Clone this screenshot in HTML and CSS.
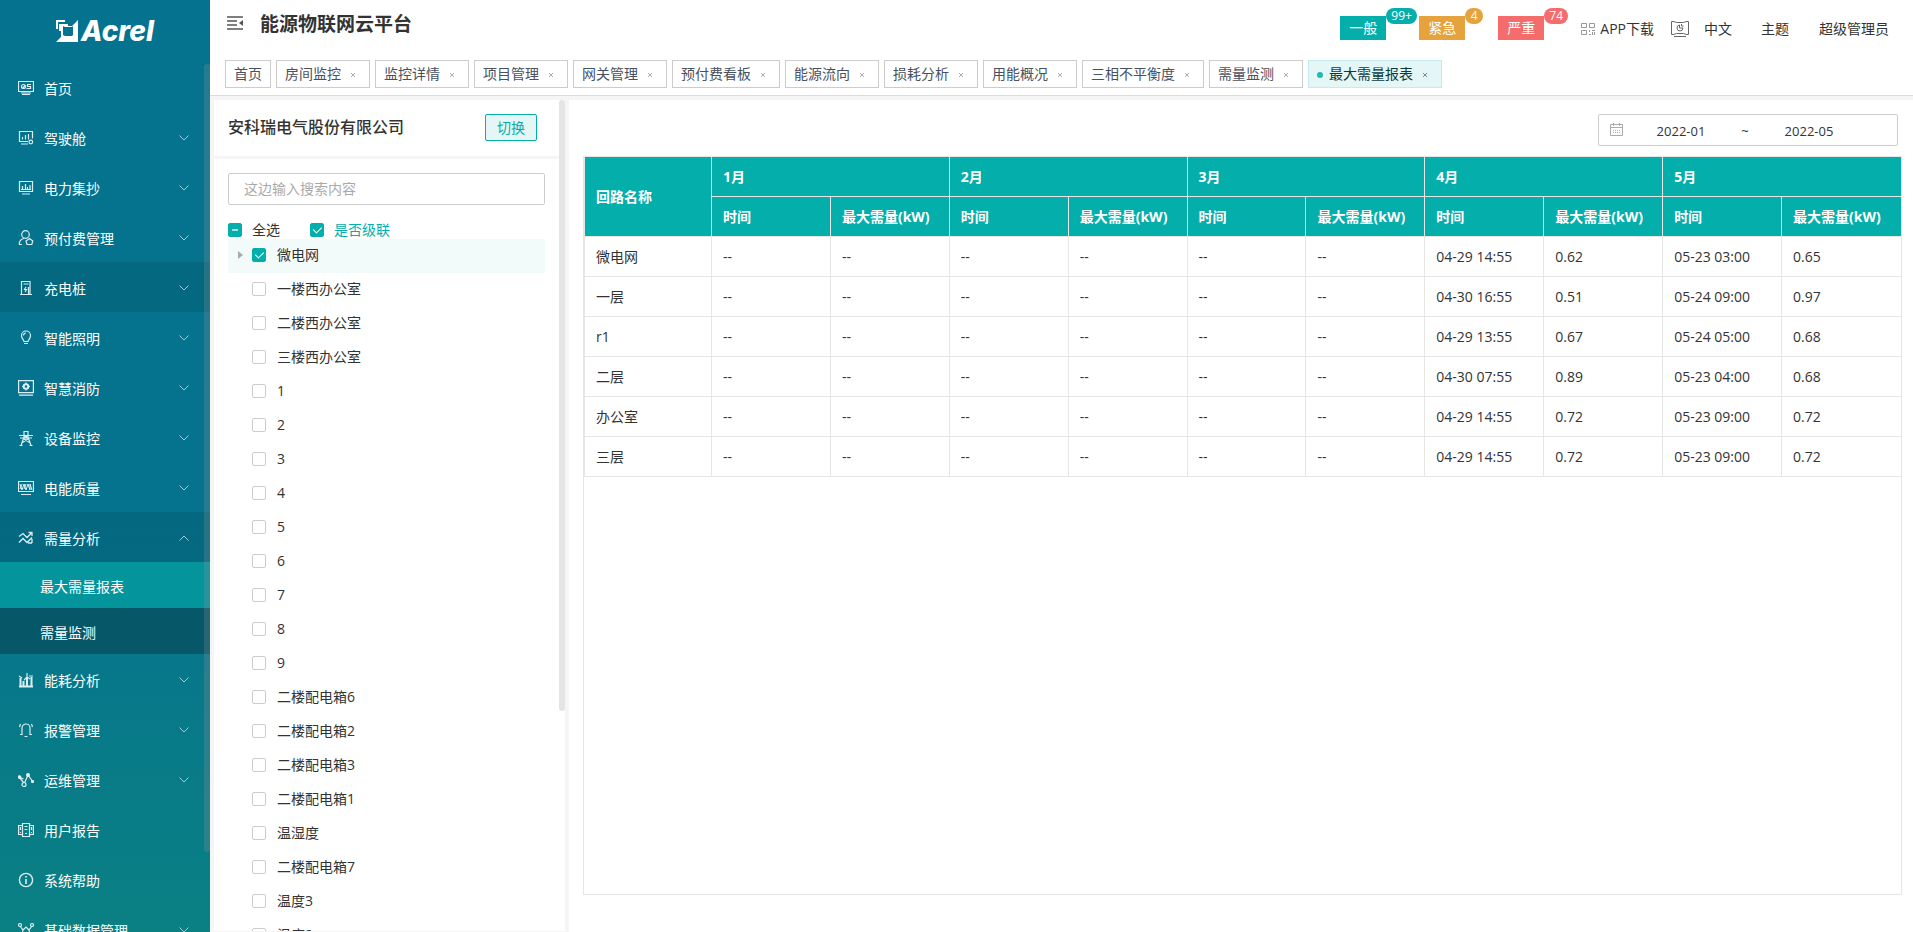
FILE: index.html
```
<!DOCTYPE html>
<html lang="zh-CN">
<head>
<meta charset="utf-8">
<title>能源物联网云平台</title>
<link rel="stylesheet" href="styles.css">
</head>
<body>
<div class="app">
  <aside class="sidebar">
    <div class="logo">
      <svg class="logo-mark" viewBox="0 0 22 22" aria-hidden="true"><path d="M0 0h9v2H2v7H0z" fill="#fff"/><path d="M22 0v22H0l5-5V11H3V4h9v2h4zM17 6l-1 1H9l-2-1v9l2 1h7l1-1z" fill="#fff" fill-rule="evenodd"/></svg>
      <span class="logo-text">Acrel</span>
    </div>
    <nav class="menu" id="menu"></nav>
    <div class="side-thumb"></div>
  </aside>
  <div class="main">
    <header class="topbar">
      <div class="top-row">
        <button class="icon-btn" aria-label="收起菜单"><svg viewBox="0 0 16 14"><path d="M0 1h16M0 5h10M0 9h10M0 13h16" stroke="#555" stroke-width="1.4"/><path d="M16 4v6l-4-3z" fill="#555"/></svg></button>
        <h1 class="title">能源物联网云平台</h1>
        <div class="alarms">
          <button class="alarm alarm-normal">一般<span class="count">99+</span></button>
          <button class="alarm alarm-urgent">紧急<span class="count">4</span></button>
          <button class="alarm alarm-severe">严重<span class="count">74</span></button>
        </div>
        <a class="top-link app-link" href="#"><svg class="qr" viewBox="0 0 14 12" fill="none" stroke="#999"><path d="M.5.5h5v4h-5zM8.500.5h5v4h-5zM.5 7.500h5v4h-5zM8.500 7v2M8 11.500h2M11 7.500h3M11.500 9v3M13.500 9v3"/></svg>APP下载</a>
        <a class="top-link screen-link" href="#" aria-label="大屏"><svg class="screen" viewBox="0 0 18 16" fill="none" stroke="#666"><path d="M3 .5H.5v13H3M15 .5h2.500v13H15M2.500.5l3 1h7l3-1M2.500 13.500l3-1h7l3 1M3 15.500h12"/><path d="M8.500 4a3 3 0 1 0 3.500 3H8.500zM10.500 3v2h2"/></svg></a>
        <a class="top-link lang-link" href="#">中文</a>
        <a class="top-link theme-link" href="#">主题</a>
        <a class="top-link" href="#">超级管理员</a>
      </div>
      <div class="tabs" id="tabs"></div>
    </header>
    <div class="content">
      <section class="left">
        <div class="company"><h2>安科瑞电气股份有限公司</h2><button class="switch">切换</button></div>
        <div class="tree-panel">
          <input class="search" type="text" placeholder="这边输入搜索内容" aria-label="搜索">
          <div class="options">
            <label class="check"><input type="checkbox" class="partial">全选</label>
            <label class="check cascade"><input type="checkbox" checked>是否级联</label>
          </div>
          <div class="tree" id="tree"></div>
        </div>
        <div class="left-thumb"></div>
      </section>
      <section class="right">
        <div class="range">
          <svg viewBox="0 0 13 13" fill="none" stroke="#aaa"><path d="M.5 1.500h12v11H.5zM.5 4.500h12M3.500 0v3M9.500 0v3"/><path d="M3 7.500h8M3 9.500h8" stroke-dasharray="1 1"/></svg>
          <input type="text" value="2022-01" aria-label="开始月份"><span>~</span><input type="text" value="2022-05" aria-label="结束月份">
        </div>
        <div class="table-box">
          <table>
            <colgroup><col class="name-col"></colgroup>
            <thead id="thead"></thead>
            <tbody id="tbody"></tbody>
          </table>
        </div>
      </section>
    </div>
  </div>
</div>
<script src="app.js"></script>
</body>
</html>
```
FILE: styles.css
```
* { box-sizing: border-box; }
body { margin: 0; font: 14px/20px "Open Sans", "Noto Sans CJK SC", sans-serif; color: #333; }
button, input { font: inherit; color: inherit; }
button { cursor: pointer; padding: 0; border: 0; background: none; }
a { color: inherit; text-decoration: none; }
.app { display: flex; height: 100vh; overflow: hidden; background: #f5f5f5; }

.sidebar { position: relative; flex: none; width: 210px; overflow: hidden; color: #fff; background: linear-gradient(#05738f 0%, #05738e 55%, #0a8083 100%); }
.logo { display: flex; align-items: center; justify-content: center; gap: 3px; height: 62px; }
.logo-mark { width: 22px; height: 22px; }
.logo-text { font: italic 800 28px/30px "Inter", sans-serif; }
.item { display: flex; align-items: center; width: 100%; height: 50px; padding: 2px 20px 0 18px; text-align: left; }
.item.dark { background: rgba(0, 40, 50, .14); }
.item svg.ico { width: 16px; height: 16px; margin-right: 10px; fill: none; stroke: #dceef1; stroke-width: 1.2; }
.item .label { flex: 1; padding-top: 2px; }
.item svg.arrow { width: 12px; height: 8px; fill: none; stroke: #a3cbd4; }
.item.open svg.arrow { transform: rotate(180deg); }
.sub { display: block; height: 46px; padding-left: 40px; line-height: 50px; background: #065768; }
.sub.active { background: #04949c; }
.side-thumb { position: absolute; right: 0; top: 64px; width: 6px; height: 788px; border-radius: 3px; background: rgba(144, 147, 153, .25); }

.main { flex: 1; min-width: 0; display: flex; flex-direction: column; }
.topbar { flex: none; height: 96px; padding: 0 24px 0 15px; background: #fff; border-bottom: 1px solid #d8dce5; }
.top-row { display: flex; align-items: center; height: 56px; padding-left: 2px; }
.icon-btn { width: 16px; height: 14px; margin-bottom: 10px; }
.icon-btn svg { display: block; width: 16px; height: 14px; fill: none; }
.title { margin: 0 auto 8px 17px; font-size: 19px; line-height: 28px; font-weight: 700; }
.alarms { display: flex; gap: 33px; margin-right: 37px; }
.alarm { position: relative; width: 46px; height: 24px; color: #fff; background: #04aeab; }
.alarm .count { position: absolute; left: 100%; top: -8px; min-width: 18px; height: 16px; padding: 0 5px; border-radius: 8px; font-size: 12px; line-height: 15px; background: inherit; }
.alarm-urgent { background: #e6a23c; }
.alarm-severe { background: #f56c6c; }
.top-link { display: flex; align-items: center; gap: 5px; padding-top: 2px; }
.qr { width: 14px; height: 12px; }
.screen { width: 18px; height: 16px; }
.app-link { margin-right: 17px; }
.screen-link { margin-right: 15px; }
.lang-link { margin-right: 29px; }
.theme-link { margin-right: 30px; }

.tabs { display: flex; gap: 5px; padding-top: 4px; }
.tab { display: flex; align-items: center; height: 28px; padding: 0 8px; white-space: nowrap; color: #495060; border: 1px solid #ccc; background: #fff; }
.tab button { width: 16px; height: 16px; margin-left: 4px; }
.tab button svg { display: block; width: 16px; height: 16px; stroke: #aab; }
.tab .dot { width: 6px; height: 6px; margin: 2px 6px 0 0; border-radius: 50%; background: #1fb9b6; }
.tab.active { color: #0b3a3c; background: #e5f6f6; border-color: #c5ecea; }
.tab.active button svg { stroke: #789; }

.content { flex: 1; min-height: 0; display: flex; gap: 4px; padding: 4px 0 0 4px; }
.left { position: relative; flex: none; width: 351px; display: flex; flex-direction: column; gap: 3px; padding-bottom: 1px; }
.company { flex: none; display: flex; justify-content: space-between; height: 56px; padding: 14px 28px 0 14px; background: #fff; }
.company h2 { margin: 0; font-size: 16px; line-height: 27px; font-weight: 500; }
.switch { width: 52px; height: 27px; color: #04aeab; background: #e5f6f6; border: 1px solid #04aeab; border-radius: 2px; }
.tree-panel { flex: 1; min-height: 0; overflow: hidden; padding: 14px 20px 0 14px; background: #fff; }
.search { display: block; width: 100%; height: 32px; padding: 0 15px 2px; border: 1px solid #ccc; border-radius: 2px; background: #fff; }
.search::placeholder { color: #aaa; }
.options { display: flex; gap: 30px; height: 34px; padding-top: 15px; }
.check { display: flex; align-items: center; gap: 10px; height: 20px; }
.check.cascade { color: #04aeab; }
.check input { appearance: none; position: relative; flex: none; width: 14px; height: 14px; margin: 0; border: 1px solid #ccc; border-radius: 2px; background: #fff; }
.check input:checked, .check input.partial { border-color: #04aeab; background: #04aeab; }
.check input:checked::after { content: ""; position: absolute; left: 4px; top: 1px; width: 4px; height: 7px; border: solid #fff; border-width: 0 1px 1px 0; transform: rotate(45deg); }
.check input.partial::after { content: ""; position: absolute; left: 3px; top: 5px; width: 6px; height: 2px; background: #a5e0df; }
.node { display: flex; align-items: center; gap: 9px; height: 34px; padding: 0 0 2px 10px; }
.node .check { gap: 11px; }
.node.current { background: #f3fafa; }
.node .caret { width: 5px; height: 8px; fill: #aaa; }
.left-thumb { position: absolute; right: 0; top: 0; width: 6px; height: 611px; border-radius: 3px; background: #e4e4e4; }

.right { flex: 1; min-width: 0; display: flex; flex-direction: column; padding: 14px 11px 37px 14px; background: #fff; }
.range { display: flex; align-items: center; align-self: flex-end; width: 300px; height: 32px; margin: 0 4px 10px 0; padding: 2px 18px 0 11px; border: 1px solid #ccc; border-radius: 2px; font-size: 13px; }
.range svg { width: 13px; height: 13px; margin: 0 1px 4px 0; }
.range input { width: 114px; border: 0; padding: 0; background: none; text-align: center; }
.range span { width: 14px; text-align: center; }
.table-box { flex: 1; min-height: 0; border: 1px solid #e6e6e6; }
table { width: 100%; table-layout: fixed; border-collapse: separate; border-spacing: 0; border-left: 1px solid #e6e6e6; }
.name-col { width: 127px; }
th, td { height: 40px; padding: 0 0 0 11px; text-align: left; white-space: nowrap; border: solid #e6e6e6; border-width: 0 1px 1px 0; }
th:last-child, td:last-child { border-right: 0; }
th { color: #fff; font-weight: 700; background: #04aeab; }
```
FILE: app.js
```
const icons = {
  monitor: '<path d="M.5 1.500h15v10H.5zM4 14.500h8M3 13h10"/><path d="M5.500 4.500a2 2 0 1 0 0 4 2 2 0 0 0 0-4zM5 8l2-3M13 4.500H9.500v2h3v2h-4"/>',
  cockpit: '<path d="M10 11.500H1.500v-10h13v7M3 14h7M4.500 9.500V7M7.500 9.500V5M10.500 9.500V4"/><circle cx="12.800" cy="12" r="1.800"/>',
  meter: '<path d="M1.500 1.500h13v10h-13zM4 14h8M4.500 9.500V6M7.500 9.500V4M9.500 9.500V7M12 9.500V5M3 9.500h10"/>',
  user: '<circle cx="7.500" cy="4.500" r="3.800"/><path d="M1.200 14.500c0-3 2-5.500 5-6M1 14.500h3"/><path d="M11.500 8.500l3.300 2.500-1 3.500H9l-1-3.500z"/>',
  pile: '<path d="M3.500 14V1.500h8.500V14M2 14.500h12M5.500 4h5M8 7l-1.500 2.500h2L7 12M10.500 7v7"/>',
  bulb: '<path d="M6 11.500C5.500 9.500 3.500 8.500 3.500 5.500a4.500 4.500 0 0 1 9 0c0 3-2 4-2.500 6zM6 13.500h4M5.500 5.500A2.500 2.500 0 0 1 8 3"/>',
  safe: '<path d="M.6.6h14.800v12H.6zM1 15.200h14"/><circle cx="8" cy="6.500" r="2.300" stroke-width="2"/><path d="M8 2.500v2M8 8.500v2M4 6.500h2M10 6.500h2"/>',
  tower: '<path d="M6 1.500h4M6 1v6L3 15.500M10 1v6l3 8.500M1 5.500h14M2 8h12M6 5l4 4-5.500 3.500M10 5L6 9l5.500 3.500M1.500 15.500h3M11.500 15.500h3"/>',
  wave: '<path d="M.5 1.500h15v10H.5zM3 14.500h10"/><path d="M2 4l2 6 2-6 2 6 2-6 2 6V4M12 4l2 6M2 9l2-5M6 9l2-5" stroke-width="1"/>',
  trend: '<path d="M1 6.500l4-3 4 4 5-5M10.500 2.500H14V6M1 12.500l4-4 4 4 5-5M14 13l-4 0M14 13V9" stroke-width="1.300"/>',
  bars: '<path d="M1 14.500h14M2.500 14V6M5.500 14V9M9 14V6M13.500 14V5" stroke-width="2"/><path d="M1 4l3 2M9 1v4M6 8l3-3 3 2M11 4h4"/>',
  bell: '<path d="M2 12.500h2V6a4 4 0 0 1 8 0v6.500h2M6.500 14.500h3M2.500 2L1.500 5M13.500 2l1 3"/>',
  nodes: '<path d="M1.500 5l4 2M6.500 11L10 3l5 7M1 5l5 6"/><circle cx="1.500" cy="5" r="1.200" fill="#dceef1"/><circle cx="6" cy="12.500" r="2"/><circle cx="10" cy="3" r="1.400" fill="#dceef1"/><circle cx="14.500" cy="9.500" r="1" fill="#dceef1"/>',
  report: '<path d="M4.500 1.500h7v13h-7zM.6 3.500h3.900v9H.6zM11.500 3.500h3.900v9h-3.900zM6.500 4.500h3M6.500 7.500h3M2.500 5v3M13.500 5v3M2 10.500h1M13 10.500h1M7 11.500h2"/>',
  info: '<circle cx="8" cy="8" r="6.600" stroke-width="1.400"/><path d="M8 7v5M8 4v1.500" stroke-width="1.600"/>',
  base: '<path d="M2 4l3 4 3-3 3 3 3-4M5 8l-1 6M11 8l1 6"/><circle cx="2" cy="3" r="1.500"/><circle cx="14" cy="3" r="1.500"/><circle cx="4" cy="13.500" r="1.500"/><circle cx="12" cy="13.500" r="1.500"/>'
};
const menu = [
  ['首页', 'monitor', 0], ['驾驶舱', 'cockpit', 1], ['电力集抄', 'meter', 1], ['预付费管理', 'user', 1],
  ['充电桩', 'pile', 1, 'dark'], ['智能照明', 'bulb', 1], ['智慧消防', 'safe', 1], ['设备监控', 'tower', 1],
  ['电能质量', 'wave', 1], ['需量分析', 'trend', 1, 'dark open', ['最大需量报表', '需量监测']],
  ['能耗分析', 'bars', 1], ['报警管理', 'bell', 1], ['运维管理', 'nodes', 1], ['用户报告', 'report', 0],
  ['系统帮助', 'info', 0], ['基础数据管理', 'base', 1]
];
const arrow = '<svg class="arrow" viewBox="0 0 12 8"><path d="M1.500 1.500L6 6l4.500-4.500"/></svg>';
document.getElementById('menu').innerHTML = menu.map(([label, icon, hasArrow, cls = '', subs = []]) =>
  `<button class="item ${cls}"><svg class="ico" viewBox="0 0 16 16">${icons[icon]}</svg><span class="label">${label}</span>${hasArrow ? arrow : ''}</button>` +
  subs.map((s, i) => `<a class="sub${i ? '' : ' active'}" href="#">${s}</a>`).join('')).join('');

const close = '<button aria-label="关闭"><svg viewBox="0 0 16 16"><path d="M6 7l4 4M10 7l-4 4"/></svg></button>';
const tabs = ['房间监控', '监控详情', '项目管理', '网关管理', '预付费看板', '能源流向', '损耗分析', '用能概况', '三相不平衡度', '需量监测'];
document.getElementById('tabs').innerHTML = '<div class="tab">首页</div>' +
  tabs.map(t => `<div class="tab">${t}${close}</div>`).join('') +
  `<div class="tab active"><span class="dot"></span>最大需量报表${close}</div>`;

const nodes = ['微电网', '一楼西办公室', '二楼西办公室', '三楼西办公室', '1', '2', '3', '4', '5', '6', '7', '8', '9',
  '二楼配电箱6', '二楼配电箱2', '二楼配电箱3', '二楼配电箱1', '温湿度', '二楼配电箱7', '温度3', '温度2'];
document.getElementById('tree').innerHTML = nodes.map((n, i) =>
  `<div class="node${i ? '' : ' current'}"><svg class="caret" viewBox="0 0 5 8">${i ? '' : '<path d="M0 0l5 4-5 4z"/>'}</svg><label class="check"><input type="checkbox"${i ? '' : ' checked'}>${n}</label></div>`).join('');

const months = [1, 2, 3, 4, 5];
document.getElementById('thead').innerHTML =
  '<tr><th rowspan="2">回路名称</th>' + months.map(m => `<th colspan="2">${m}月</th>`).join('') + '</tr><tr>' +
  months.map(() => '<th>时间</th><th>最大需量(kW)</th>').join('') + '</tr>';
const rows = [
  ['微电网', '04-29 14:55', '0.62', '05-23 03:00', '0.65'], ['一层', '04-30 16:55', '0.51', '05-24 09:00', '0.97'],
  ['r1', '04-29 13:55', '0.67', '05-24 05:00', '0.68'], ['二层', '04-30 07:55', '0.89', '05-23 04:00', '0.68'],
  ['办公室', '04-29 14:55', '0.72', '05-23 09:00', '0.72'], ['三层', '04-29 14:55', '0.72', '05-23 09:00', '0.72']
];
document.getElementById('tbody').innerHTML = rows.map(([name, ...v]) =>
  '<tr>' + [name, ...Array(6).fill('--'), ...v].map(c => `<td>${c}</td>`).join('') + '</tr>').join('');
```
